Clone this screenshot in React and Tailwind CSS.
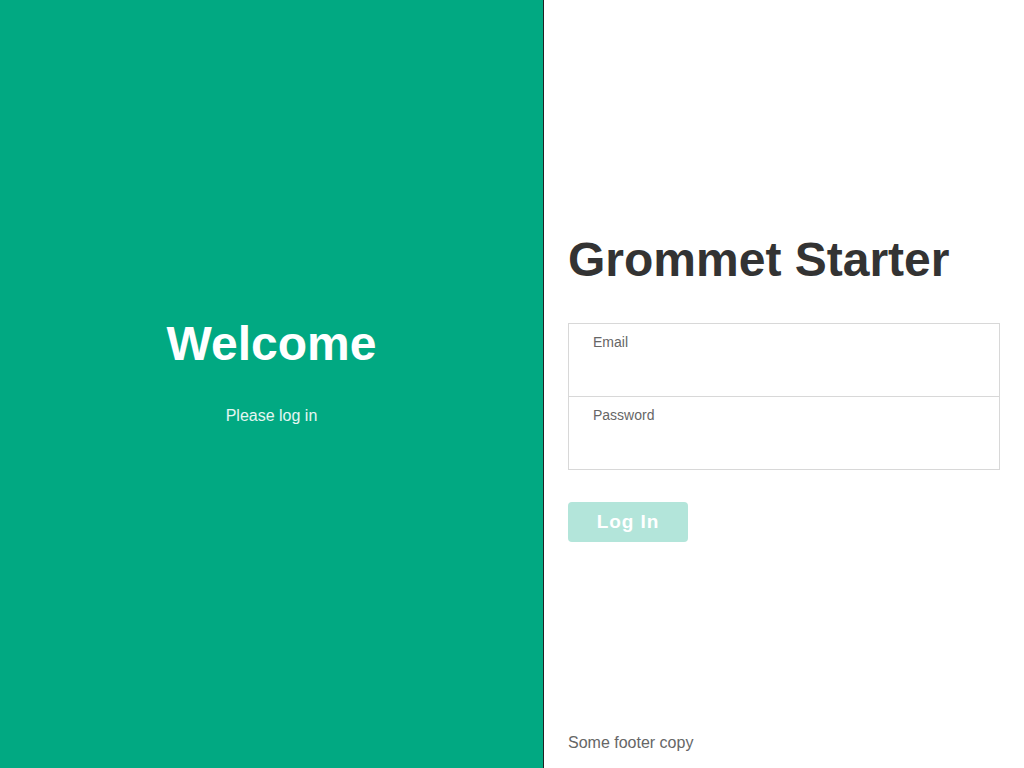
import React from 'react';

function Field({ label, type, last }) {
    return (
        <label className={`flex flex-col px-6 pt-2 ${last ? 'h-[72px]' : 'h-[73px] border-b border-[#d8d8d8]'}`}>
            <span className="text-sm leading-5 text-[#666666]">{label}</span>
            <input type={type} className="mt-1 bg-transparent text-base outline-none" />
        </label>
    );
}

export default function App() {
    return (
        <div className="flex h-screen w-full font-['Liberation_Sans',Arial,sans-serif]">
            <section className="flex w-[544px] flex-col items-center justify-center border-r border-[#222] bg-[#01a982] pb-6 text-white">
                <h1 className="text-[48px] font-bold leading-[56px]">Welcome</h1>
                <p className="mt-8 text-base leading-6 text-white/90">Please log in</p>
            </section>

            <section className="flex flex-1 flex-col px-6">
                <div className="h-[232px]" />
                <h2 className="text-[48px] font-bold leading-[56px] text-[#333333]">Grommet Starter</h2>

                <form className="mt-[35px] flex flex-col" onSubmit={(e) => e.preventDefault()}>
                    <div className="border border-[#d8d8d8]">
                        <Field label="Email" type="email" />
                        <Field label="Password" type="password" last />
                    </div>
                    <button
                        type="submit"
                        className="mt-[32px] h-10 w-[120px] rounded bg-[#b3e5da] text-[19px] font-bold tracking-wider text-white"
                    >
                        Log In
                    </button>
                </form>

                <footer className="mt-auto pb-[13px] text-base leading-6 text-[#666666]">Some footer copy</footer>
            </section>
        </div>
    );
}
